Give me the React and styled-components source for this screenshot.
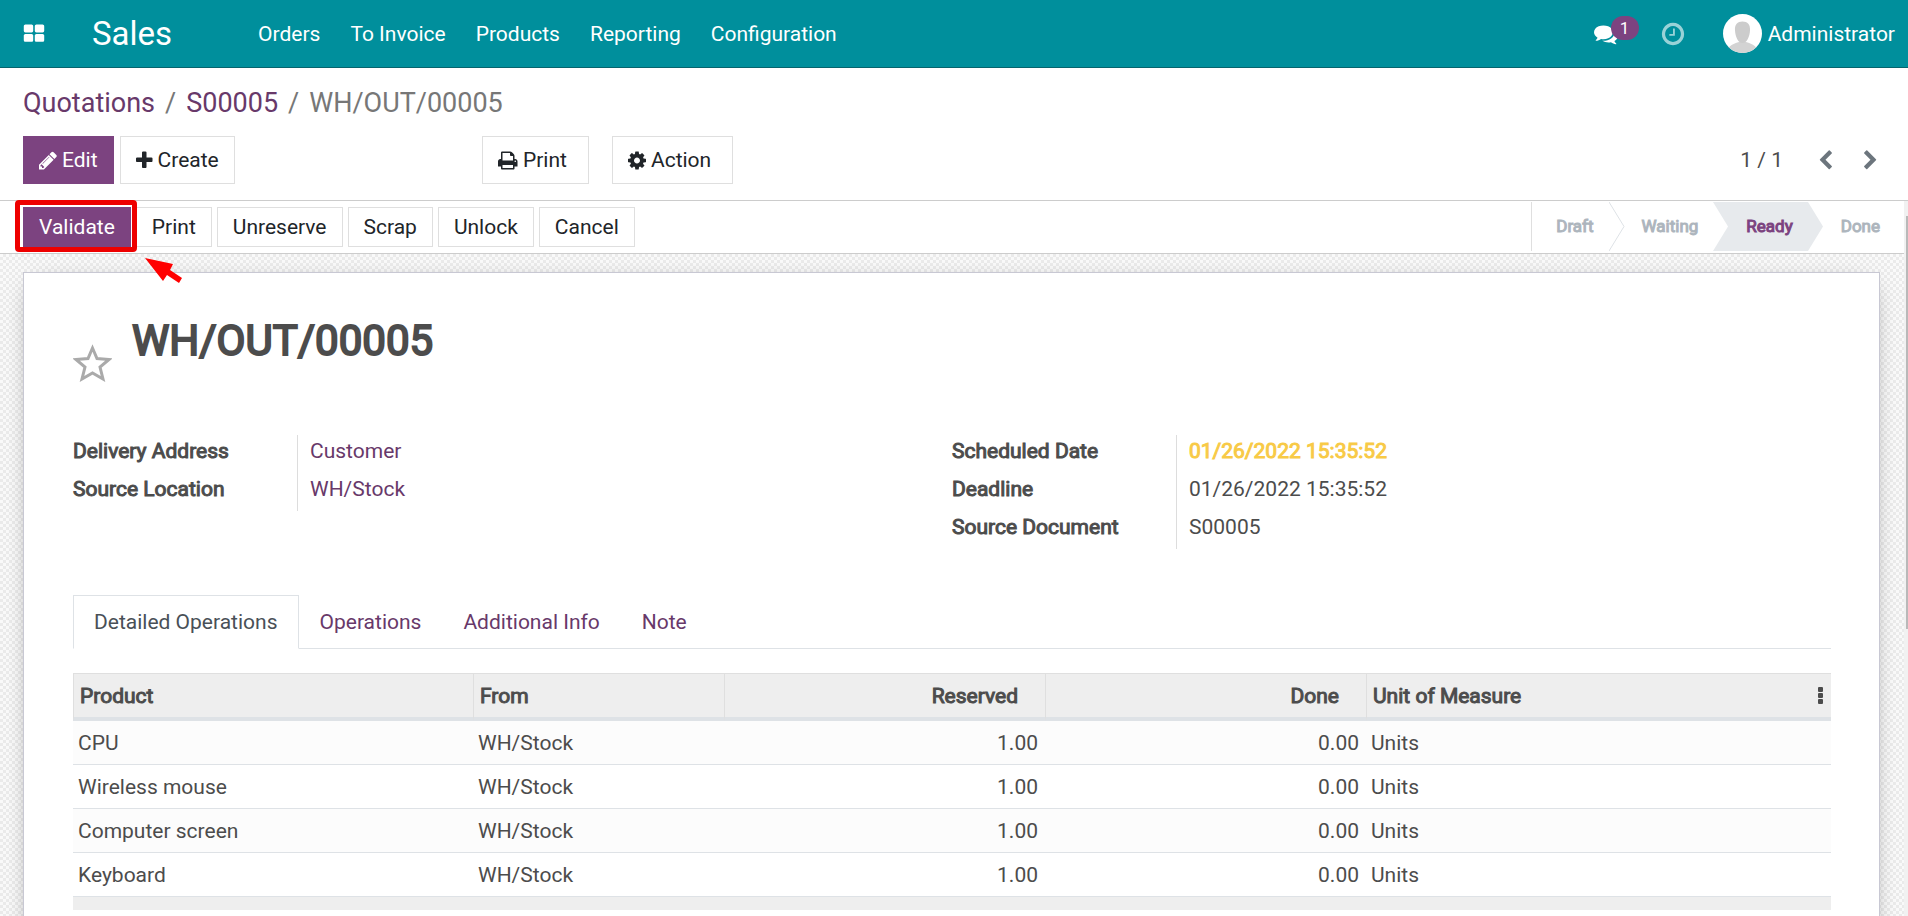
import React from "react";
import styled, { createGlobalStyle } from "styled-components";

const GlobalStyle = createGlobalStyle`
  * {
    box-sizing: border-box;
  }

  html,
  body,
  #root {
    height: 100%;
    margin: 0;
  }

  body {
    overflow: hidden;
    background: #ffffff;
    color: #4c4c4c;
    font-family: Roboto, "Liberation Sans", sans-serif;
    font-size: 21px;
    line-height: 32px;
  }

  button {
    font: inherit;
    cursor: pointer;
  }

  a {
    color: #68396a;
    text-decoration: none;
  }
`;

const Page = styled.div`
  display: flex;
  flex-direction: column;
  height: 100%;
`;

const Navbar = styled.header`
  display: flex;
  align-items: center;
  flex: none;
  height: 68px;
  padding: 0 13px 0 23px;
  background: #008f9c;
  border-bottom: 1px solid #06646d;
  color: #ffffff;

  a,
  button {
    color: #ffffff;
  }
`;

const NavButton = styled.button`
  display: flex;
  align-items: center;
  padding: 0;
  border: none;
  background: none;
`;

const Brand = styled.a`
  margin: 0 70px 0 47px;
  font-size: 33px;
`;

const Menu = styled.nav`
  display: flex;
  flex: 1;
  gap: 30px;
  margin-left: 16px;
`;

const Systray = styled.div`
  display: flex;
  align-items: center;
`;

const Messages = styled(NavButton)`
  position: relative;
  margin-right: 42px;
`;

const Counter = styled.span`
  position: absolute;
  left: 17px;
  top: -6px;
  width: 28px;
  height: 24px;
  border-radius: 12px;
  background: #7c4380;
  font-size: 17px;
  line-height: 24px;
  text-align: center;
`;

const Activities = styled(NavButton)`
  margin-right: 37px;
  opacity: 0.6;
`;

const User = styled(NavButton)`
  gap: 6px;
`;

const ControlPanel = styled.div`
  flex: none;
  padding: 17px 27px 16px 23px;
  border-bottom: 1px solid #cccccc;
`;

const Breadcrumbs = styled.ol`
  display: flex;
  margin: 0;
  padding: 0 0 15px;
  list-style: none;
  font-size: 27px;
  line-height: 36px;
  color: #777777;

  li + li::before {
    content: "/";
    padding: 0 10px;
  }
`;

const ControlRow = styled.div`
  display: flex;
  align-items: center;
`;

const ButtonGroup = styled.div`
  display: flex;
  gap: ${({ $gap }) => $gap || "6px"};
`;

const MainButtons = styled(ButtonGroup)`
  width: 459px;
`;

const Button = styled.button`
  display: flex;
  align-items: center;
  gap: 5px;
  height: ${({ $small }) => ($small ? "40px" : "48px")};
  padding: 0 ${({ $menu }) => ($menu ? "21px" : "15px")} 0 15px;
  border: 1px solid ${({ $primary }) => ($primary ? "#7c4380" : "#dfdfdf")};
  background: ${({ $primary }) => ($primary ? "#7c4380" : "#ffffff")};
  color: ${({ $primary }) => ($primary ? "#ffffff" : "#212529")};
`;

const Pager = styled.div`
  display: flex;
  align-items: center;
  margin-left: auto;
`;

const PagerButton = styled(NavButton)`
  margin-left: ${({ $first }) => ($first ? "32px" : "24px")};
  color: #6c757d;
`;

const Scroller = styled.main`
  position: relative;
  display: flex;
  flex: 1;
  flex-direction: column;
  min-height: 0;
  margin-right: 4px;
`;

const StatusBar = styled.div`
  display: flex;
  align-items: center;
  justify-content: space-between;
  flex: none;
  height: 53px;
  padding: 0 24px 0 23px;
  border-bottom: 1px solid #cccccc;
  background: #ffffff;
`;

const Highlighted = styled.div`
  position: relative;
`;

const HighlightBox = styled.div`
  position: absolute;
  inset: -7px -6px -5px -8px;
  border: 5px solid #ee0000;
  border-radius: 4px;
  pointer-events: none;
`;

const HighlightArrow = styled.svg`
  position: absolute;
  left: 122px;
  top: 51px;
  z-index: 1;
`;

const Steps = styled.div`
  display: flex;
  align-self: stretch;
  margin: 1px 0 2px;
  border-left: 1px solid #dfdfdf;
`;

const Step = styled.button`
  position: relative;
  padding: 0 15px 2px 33px;
  border: none;
  background: ${({ $active }) => ($active ? "#e7eaed" : "none")};
  color: ${({ $active }) => ($active ? "#7c4380" : "#adb5bd")};
  font-size: 17px;
  -webkit-text-stroke: 1px;

  &:first-child {
    padding-left: 24px;
  }

  &:last-child {
    padding-right: 0;
  }
`;

const StepArrow = styled.svg`
  position: absolute;
  top: 0;
  left: ${({ $side }) => ($side === "left" ? "0" : "100%")};
  z-index: 1;
`;

const Backdrop = styled.div`
  flex: 1;
  min-height: 0;
  overflow: hidden;
  padding: 18px 24px 0 23px;
  background-color: #f7f7f7;
  background-image: conic-gradient(
    #ebebeb 25%,
    #fafafa 0 50%,
    #ebebeb 0 75%,
    #fafafa 0
  );
  background-size: 6px 6px;
`;

const Sheet = styled.section`
  min-height: 900px;
  padding: 36px 48px 36px 49px;
  border: 1px solid #c8c8d3;
  background: #ffffff;
  box-shadow: 0 5px 24px -12px rgba(0, 0, 0, 0.6);
`;

const TitleRow = styled.div`
  display: flex;
  align-items: flex-start;
  gap: 20px;
  margin-bottom: 53px;
`;

const Title = styled.h1`
  margin: 5px 0 0;
  font-size: 42px;
  font-weight: 400;
  line-height: 54px;
  -webkit-text-stroke: 2px;
`;

const StarButton = styled(NavButton)`
  margin-top: 35px;
`;

const Groups = styled.div`
  display: grid;
  grid-template-columns: 1fr 1fr;
  align-items: start;
  margin-bottom: 46px;
`;

const Fields = styled.dl`
  display: grid;
  grid-template-columns: 224px 1fr;
  margin: 0;

  dt,
  dd {
    height: 38px;
    margin: 0;
  }

  dt {
    -webkit-text-stroke: 1px;
  }

  dd {
    padding: 0 12px;
    border-left: 1px solid #dddddd;
  }
`;

const Warning = styled.span`
  color: #f8ca46;
  -webkit-text-stroke: 1px;
`;

const Tabs = styled.div`
  display: flex;
  margin-bottom: 24px;
  border-bottom: 1px solid #dee2e6;
`;

const Tab = styled.button`
  height: 54px;
  margin-bottom: -1px;
  padding: 0 20px;
  border: 1px solid ${({ $active }) => ($active ? "#dee2e6" : "transparent")};
  border-bottom-color: ${({ $active }) => ($active ? "#ffffff" : "transparent")};
  background: none;
  color: ${({ $active }) => ($active ? "#495057" : "#68396a")};
`;

const Table = styled.table`
  width: 100%;
  border-collapse: separate;
  border-spacing: 0;
  table-layout: fixed;

  th {
    height: 48px;
    padding: 0 6px;
    border-top: 1px solid #dfdfdf;
    border-left: 1px solid #dfdfdf;
    border-bottom: 4px solid #dee2e6;
    background: #eeeeee;
    font-weight: 400;
    text-align: left;
    -webkit-text-stroke: 1px;
  }

  td {
    height: 44px;
    padding: 0 5px;
    border-bottom: 1px solid #dee2e6;
  }

  tbody tr:nth-child(odd) td {
    background: #fcfcfc;
  }

  tfoot td {
    height: 13px;
    border: none;
    background: #eeeeee;
  }

  th.number {
    padding-right: 27px;
    text-align: right;
  }

  td.number {
    padding-right: 7px;
    text-align: right;
  }
`;

const Col = styled.col`
  width: ${({ $width }) => $width};
`;

const LastHeader = styled.div`
  display: flex;
  align-items: center;
  justify-content: space-between;
`;

const ScrollTrack = styled.div`
  position: absolute;
  top: 0;
  right: -4px;
  bottom: 0;
  width: 4px;
  padding: 15px 0 0 2px;
  background: #f1f1f1;
`;

const ScrollThumb = styled.div`
  height: 59%;
  background: #b9b9b9;
`;

// x and w trim each glyph's side bearings inside the 1792 grid
const ICONS = {
  apps: {
    d: "M832 1024v384q0 52-38 90t-90 38h-512q-52 0-90-38t-38-90v-384q0-52 38-90t90-38h512q52 0 90 38t38 90zm0-768v384q0 52-38 90t-90 38h-512q-52 0-90-38t-38-90v-384q0-52 38-90t90-38h512q52 0 90 38t38 90zm896 768v384q0 52-38 90t-90 38h-512q-52 0-90-38t-38-90v-384q0-52 38-90t90-38h512q52 0 90 38t38 90zm0-768v384q0 52-38 90t-90 38h-512q-52 0-90-38t-38-90v-384q0-52 38-90t90-38h512q52 0 90 38t38 90z",
  },
  plus: {
    x: 192,
    w: 1450,
    d: "M1600 736v192q0 40-28 68t-68 28h-416v416q0 40-28 68t-68 28h-192q-40 0-68-28t-28-68v-416h-416q-40 0-68-28t-28-68v-192q0-40 28-68t68-28h416v-416q0-40 28-68t68-28h192q40 0 68 28t28 68v416h416q40 0 68 28t28 68z",
  },
  pencil: {
    x: 128,
    w: 1536,
    d: "M491 1536l91-91-235-235-91 91v107h128v128h107zm523-928q0-22-22-22-10 0-17 7l-542 542q-7 7-7 17 0 22 22 22 10 0 17-7l542-542q7-7 7-17zm-54-192l416 416-832 832h-416v-416zm683 96q0 53-37 90l-166 166-416-416 166-165q36-38 90-38 53 0 91 38l235 234q37 39 37 91z",
  },
  print: {
    x: 64,
    w: 1706,
    d: "M448 1536h896v-256h-896v256zm0-640h896v-384h-160q-40 0-68-28t-28-68v-160h-640v640zm1152 64q0-26-19-45t-45-19-45 19-19 45 19 45 45 19 45-19 19-45zm128 0v416q0 13-9.5 22.5t-22.5 9.5h-224v160q0 40-28 68t-68 28h-960q-40 0-68-28t-28-68v-160h-224q-13 0-22.5-9.5t-9.5-22.5v-416q0-79 56.5-135.5t135.5-56.5h64v-544q0-40 28-68t68-28h672q40 0 88 20t76 48l152 152q28 28 48 76t20 88v256h64q79 0 135.5 56.5t56.5 135.5z",
  },
  cog: {
    x: 128,
    w: 1536,
    d: "M1152 896q0-106-75-181t-181-75-181 75-75 181 75 181 181 75 181-75 75-181zm512-109v222q0 12-8 23t-20 13l-185 28q-19 54-39 91 35 50 107 138 10 12 10 25t-9 23q-27 37-99 108t-94 71q-12 0-26-9l-138-108q-44 23-91 38-16 136-29 186-7 28-36 28h-222q-14 0-24.5-8.5t-11.5-21.5l-28-184q-49-16-90-37l-141 107q-10 9-25 9-14 0-25-11-126-114-165-168-7-10-7-23 0-12 8-23 15-21 51-66.5t54-70.5q-27-50-41-99l-183-27q-13-2-21-12.5t-8-23.5v-222q0-12 8-23t19-13l186-28q14-46 39-92-40-57-107-138-10-12-10-24 0-10 9-23 26-36 98.5-107.5t94.5-71.5q13 0 26 10l138 107q44-23 91-38 16-136 29-186 7-28 36-28h222q14 0 24.5 8.5t11.5 21.5l28 184q49 16 90 37l142-107q9-9 24-9 13 0 25 10 129 119 165 170 7 8 7 22 0 12-8 23-15 21-51 66.5t-54 70.5q26 50 41 98l183 28q13 2 21 12.5t8 23.5z",
  },
  left: {
    d: "M1427 301l-531 531 531 531q19 19 19 45t-19 45l-166 166q-19 19-45 19t-45-19l-742-742q-19-19-19-45t19-45l742-742q19-19 45-19t45 19l166 166q19 19 19 45t-19 45z",
  },
  right: {
    d: "M1363 877l-742 742q-19 19-45 19t-45-19l-166-166q-19-19-19-45t19-45l531-531-531-531q-19-19-19-45t19-45l166-166q19-19 45-19t45 19l742 742q19 19 19 45t-19 45z",
  },
  comments: {
    d: "M1408 768q0 139-94 257t-256.5 186.5-353.5 68.5q-86 0-176-16-124 88-278 128-36 9-86 16h-3q-11 0-20.5-8t-11.5-21q-1-3-1-6.5t.5-6.5 2-6l2.5-5 3.5-5.5 4-5 4.5-5 4-4.5q5-6 23-25t26-29.5 22.5-29 25-38.5 20.5-44q-124-72-195-177t-71-224q0-139 94-257t256.5-186.5 353.5-68.5 353.5 68.5 256.5 186.5 94 257zm384 256q0 120-71 224.5t-195 176.5q10 24 20.5 44t25 38.5 22.5 29 26 29.5 23 25q1 1 4 4.5t4.5 5 4 5 3.5 5.5l2.5 5 2 6 .5 6.5-1 6.5q-3 14-13 22t-22 7q-50-7-86-16-154-40-278-128-90 16-176 16-271 0-472-132 58 4 88 4 161 0 309-45t264-129q125-92 192-212t67-254q0-77-23-152 129 71 204 178t75 230z",
  },
  clock: {
    d: "M1024 544v448q0 14-9 23t-23 9h-320q-14 0-23-9t-9-23v-64q0-14 9-23t23-9h224v-352q0-14 9-23t23-9h64q14 0 23 9t9 23zm416 352q0-148-73-273t-198-198-273-73-273 73-198 198-73 273 73 273 198 198 273 73 273-73 198-198 73-273zm224 0q0 209-103 385.5t-279.5 279.5-385.5 103-385.5-103-279.5-279.5-103-385.5 103-385.5 279.5-279.5 385.5-103 385.5 103 279.5 279.5 103 385.5z",
  },
};

function Icon({ name, size = 21 }) {
  const { x = 0, w = 1792, d } = ICONS[name];
  return (
    <svg
      width={Math.round((size * w) / 1792)}
      height={size}
      viewBox={`${x} 0 ${w} 1792`}
      fill="currentColor"
      aria-hidden="true"
    >
      <path d={d} />
    </svg>
  );
}

function Avatar() {
  return (
    <svg width="39" height="39" viewBox="0 0 39 39" aria-hidden="true">
      <clipPath id="avatar">
        <circle cx="19.5" cy="19.5" r="19.5" />
      </clipPath>
      <g clipPath="url(#avatar)">
        <rect width="39" height="39" fill="#ffffff" />
        <path d="M3 39c1-6 6-9 13-11h7c7 2 12 5 13 11z" fill="#d3d3d3" />
        <path
          d="M19.500 7.500c5 0 8 3 7.500 9-.3 6-3 12.500-7.500 12.500s-7.200-6.500-7.500-12.500c-.5-6 2.500-9 7.500-9z"
          fill="#cccccc"
        />
      </g>
    </svg>
  );
}

const menu = ["Orders", "To Invoice", "Products", "Reporting", "Configuration"];
const actions = ["Print", "Unreserve", "Scrap", "Unlock", "Cancel"];
const tabs = ["Detailed Operations", "Operations", "Additional Info", "Note"];
const products = ["CPU", "Wireless mouse", "Computer screen", "Keyboard"];

export default function App() {
  return (
    <Page>
      <GlobalStyle />
      <Navbar>
        <NavButton aria-label="Applications">
          <Icon name="apps" size={22} />
        </NavButton>
        <Brand href="#">Sales</Brand>
        <Menu>
          {menu.map((item) => (
            <a href="#" key={item}>
              {item}
            </a>
          ))}
        </Menu>
        <Systray>
          <Messages aria-label="Messages">
            <Icon name="comments" size={24} />
            <Counter>1</Counter>
          </Messages>
          <Activities aria-label="Activities">
            <Icon name="clock" size={26} />
          </Activities>
          <User>
            <Avatar />
            Administrator
          </User>
        </Systray>
      </Navbar>

      <ControlPanel>
        <Breadcrumbs>
          <li>
            <a href="#">Quotations</a>
          </li>
          <li>
            <a href="#">S00005</a>
          </li>
          <li>WH/OUT/00005</li>
        </Breadcrumbs>
        <ControlRow>
          <MainButtons>
            <Button $primary>
              <Icon name="pencil" />
              Edit
            </Button>
            <Button>
              <Icon name="plus" />
              Create
            </Button>
          </MainButtons>
          <ButtonGroup $gap="23px">
            <Button $menu>
              <Icon name="print" />
              Print
            </Button>
            <Button $menu>
              <Icon name="cog" />
              Action
            </Button>
          </ButtonGroup>
          <Pager>
            <span>1 / 1</span>
            <PagerButton $first aria-label="Previous">
              <Icon name="left" />
            </PagerButton>
            <PagerButton aria-label="Next">
              <Icon name="right" />
            </PagerButton>
          </Pager>
        </ControlRow>
      </ControlPanel>

      <Scroller>
        <StatusBar>
          <ButtonGroup $gap="5px">
            <Highlighted>
              <Button $small $primary>
                Validate
              </Button>
              <HighlightBox />
              <HighlightArrow width="38" height="26" viewBox="0 0 38 26">
                <path d="M0 0L28 6L25 12L37 20L34 25L22 17L18 23Z" fill="#f00" />
              </HighlightArrow>
            </Highlighted>
            {actions.map((action) => (
              <Button $small key={action}>
                {action}
              </Button>
            ))}
          </ButtonGroup>
          <Steps>
            <Step>
              Draft
              <StepArrow width="16" height="49" viewBox="0 0 16 49">
                <path d="M0 0L15 24.500L0 49" fill="none" stroke="#dee2e6" />
              </StepArrow>
            </Step>
            <Step>Waiting</Step>
            <Step $active>
              <StepArrow $side="left" width="16" height="49" viewBox="0 0 16 49">
                <path d="M0 0L15 24.500L0 49" fill="#ffffff" />
              </StepArrow>
              Ready
              <StepArrow width="16" height="49" viewBox="0 0 16 49">
                <path d="M0 0L15 24.500L0 49" fill="#e7eaed" />
              </StepArrow>
            </Step>
            <Step>Done</Step>
          </Steps>
        </StatusBar>

        <Backdrop>
          <Sheet>
            <TitleRow>
              <StarButton aria-label="Priority">
                <svg width="39" height="38" viewBox="0 0 39 38">
                  <path
                    d="M19.500 4L24 14.500L36 15.500L27 23L30 35L19.500 29L9 35L12 23L3 15.500L15 14.500Z"
                    fill="none"
                    stroke="#aaaaaa"
                    strokeWidth="3"
                  />
                </svg>
              </StarButton>
              <Title>WH/OUT/00005</Title>
            </TitleRow>

            <Groups>
              <Fields>
                <dt>Delivery Address</dt>
                <dd>
                  <a href="#">Customer</a>
                </dd>
                <dt>Source Location</dt>
                <dd>
                  <a href="#">WH/Stock</a>
                </dd>
              </Fields>
              <Fields>
                <dt>Scheduled Date</dt>
                <dd>
                  <Warning>01/26/2022 15:35:52</Warning>
                </dd>
                <dt>Deadline</dt>
                <dd>01/26/2022 15:35:52</dd>
                <dt>Source Document</dt>
                <dd>S00005</dd>
              </Fields>
            </Groups>

            <Tabs role="tablist">
              {tabs.map((tab, i) => (
                <Tab role="tab" key={tab} $active={i === 0} aria-selected={i === 0}>
                  {tab}
                </Tab>
              ))}
            </Tabs>

            <Table>
              <colgroup>
                <Col $width="400px" />
                <Col $width="251px" />
                <Col $width="321px" />
                <Col $width="321px" />
                <Col />
              </colgroup>
              <thead>
                <tr>
                  <th>Product</th>
                  <th>From</th>
                  <th className="number">Reserved</th>
                  <th className="number">Done</th>
                  <th>
                    <LastHeader>
                      Unit of Measure
                      <svg width="8" height="18" viewBox="0 0 8 18" fill="currentColor">
                        <rect x="1" y="0" width="5" height="5" rx="1" />
                        <rect x="1" y="6" width="5" height="5" rx="1" />
                        <rect x="1" y="12" width="5" height="5" rx="1" />
                      </svg>
                    </LastHeader>
                  </th>
                </tr>
              </thead>
              <tbody>
                {products.map((product) => (
                  <tr key={product}>
                    <td>{product}</td>
                    <td>WH/Stock</td>
                    <td className="number">1.00</td>
                    <td className="number">0.00</td>
                    <td>Units</td>
                  </tr>
                ))}
              </tbody>
              <tfoot>
                <tr>
                  <td colSpan={5} />
                </tr>
              </tfoot>
            </Table>
          </Sheet>
        </Backdrop>
        <ScrollTrack>
          <ScrollThumb />
        </ScrollTrack>
      </Scroller>
    </Page>
  );
}
